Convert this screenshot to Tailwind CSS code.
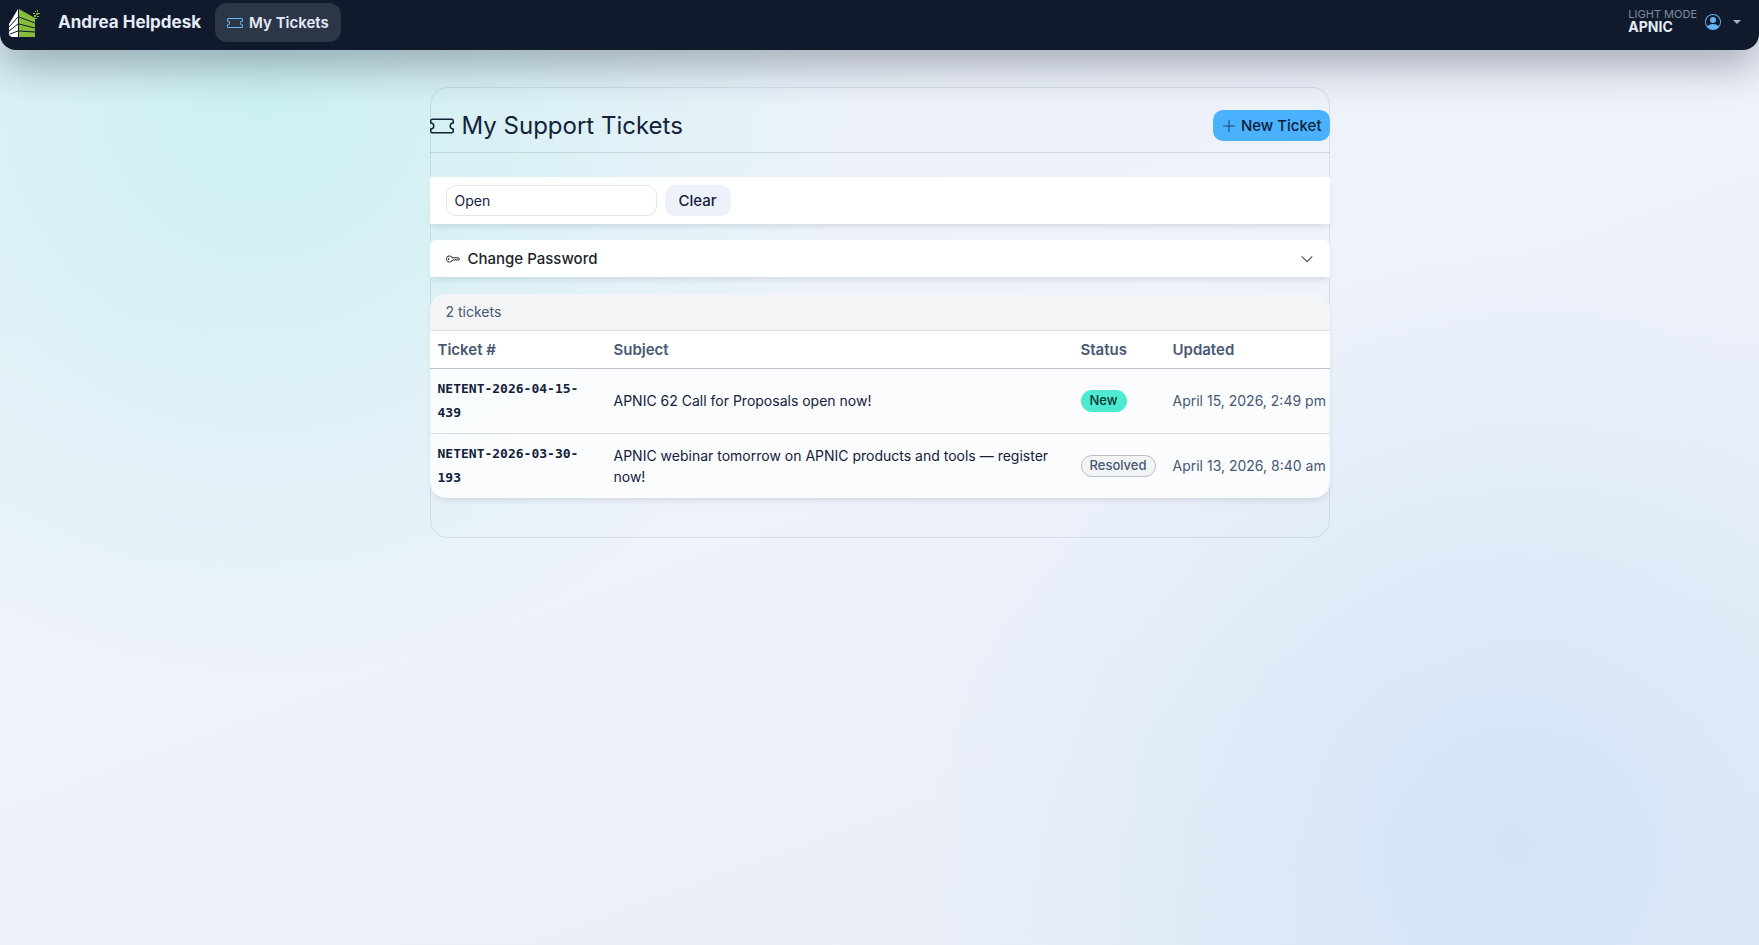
<!DOCTYPE html>
<html lang="en">
  <head>
    <meta charset="UTF-8" />
    <meta name="viewport" content="width=device-width, initial-scale=1.0" />
    <title>My Tickets - Andrea Helpdesk</title>
    <script src="https://cdn.jsdelivr.net/npm/@tailwindcss/browser@4"></script>
    <style>
      body {
        font-family: Inter, "Open Sans", sans-serif;
        background:
          radial-gradient(circle at 15% 10%, rgba(77, 233, 209, 0.2), transparent 34%),
          radial-gradient(circle at 86% 89%, rgba(74, 165, 240, 0.15), transparent 34%),
          linear-gradient(160deg, #ebf2f9 0%, #eef2fa 45%, #e9eef7 100%);
      }
    </style>
  </head>
  <body class="min-h-screen text-sm text-[#14213a]">
    <nav class="flex h-[50px] items-start justify-between rounded-b-2xl bg-[#111a2c] px-2 text-[#e4ecf8] shadow-[0_16px_40px_rgba(15,23,42,0.32)]">
      <div class="flex items-center pt-[3px]">
        <a href="#" class="flex items-center gap-[18px] text-[17px] font-bold">
          <svg class="size-8" viewBox="0 0 32 32" aria-hidden="true">
            <path d="M10 2v28H5q-4 0-4-4v-9z" fill="#fff" />
            <path d="M11 2l16 9v19H11z" fill="#86bc3c" />
            <path d="M11 10l16 6M11 17l16 4M11 24l16 1M10 10L1 20M10 17l-9 7M10 24l-8 3" stroke="#111a2c" fill="none" />
            <path d="M26 8h2v2h-2zM28 6h2v2h-2zM29 9h2v1h-2zM27 4h1v1h-1zM29 3h1v2h-1zM25 6h2v1h-2zM30 6h2v1h-2zM27 11h2v1h-2z" fill="#86bc3c" />
          </svg>
          Andrea Helpdesk
        </a>
        <a href="#" class="ml-3.5 flex h-[39px] items-center gap-1.5 rounded-xl bg-[#2d3646] px-3 text-[15px] font-semibold">
          <svg class="size-4 text-[#65b5f6]" fill="currentColor" viewBox="0 0 16 16" aria-hidden="true">
            <path d="M0 4.5A1.500 1.500 0 0 1 1.500 3h13A1.500 1.500 0 0 1 16 4.500V6a.5.5 0 0 1-.5.5 1.500 1.500 0 0 0 0 3 .5.5 0 0 1 .5.5v1.500a1.500 1.500 0 0 1-1.500 1.500h-13A1.500 1.500 0 0 1 0 11.500V10a.5.5 0 0 1 .5-.5 1.500 1.500 0 1 0 0-3A.5.5 0 0 1 0 6zM1.500 4a.5.5 0 0 0-.5.5v1.050a2.500 2.500 0 0 1 0 4.900v1.050a.5.5 0 0 0 .5.5h13a.5.5 0 0 0 .5-.5v-1.050a2.500 2.500 0 0 1 0-4.900V4.500a.5.5 0 0 0-.5-.5z" />
          </svg>
          My Tickets
        </a>
      </div>
      <button type="button" class="flex items-center gap-2 pt-[9px] pr-2.5 text-left">
        <span class="flex flex-col">
          <span class="text-[11px] leading-[11px] text-[#7e8a9d]">LIGHT MODE</span>
          <span class="text-sm leading-[14px] font-bold">APNIC</span>
        </span>
        <svg class="size-4 text-[#65b5f6]" fill="currentColor" viewBox="0 0 16 16" aria-hidden="true">
          <path d="M11 6a3 3 0 1 1-6 0 3 3 0 0 1 6 0" />
          <path fill-rule="evenodd" d="M0 8a8 8 0 1 1 16 0A8 8 0 0 1 0 8m8-7a7 7 0 0 0-5.468 11.370C3.242 11.226 4.805 10 8 10s4.757 1.225 5.468 2.370A7 7 0 0 0 8 1" />
        </svg>
        <span class="ml-1 border-x-4 border-t-4 border-x-transparent border-t-[#a9b2c0]"></span>
      </button>
    </nav>

    <main class="mx-auto mt-[37px] max-w-[900px] rounded-[18px] pt-[23px] pb-10 inset-ring inset-ring-[#64748b]/15">
      <header class="flex items-start justify-between border-b border-[#64748b]/20 pb-[10px]">
        <h1 class="flex h-8 items-center gap-2 text-2xl">
          <svg class="size-6" fill="currentColor" viewBox="0 0 16 16" aria-hidden="true">
            <path d="M0 4.500A1.500 1.500 0 0 1 1.500 3h13A1.500 1.500 0 0 1 16 4.500V6a.5.5 0 0 1-.5.5 1.500 1.500 0 0 0 0 3 .5.5 0 0 1 .5.5v1.500a1.500 1.500 0 0 1-1.500 1.500h-13A1.500 1.500 0 0 1 0 11.500V10a.5.5 0 0 1 .5-.5 1.500 1.500 0 1 0 0-3A.5.5 0 0 1 0 6zM1.500 4a.5.5 0 0 0-.5.5v1.050a2.500 2.500 0 0 1 0 4.900v1.050a.5.5 0 0 0 .5.5h13a.5.5 0 0 0 .5-.5v-1.050a2.500 2.500 0 0 1 0-4.900V4.500a.5.5 0 0 0-.5-.5z" />
          </svg>
          My Support Tickets
        </h1>
        <button type="button" class="flex h-[31px] items-center gap-1 rounded-[10px] bg-[#4ab1ff] px-2 text-[15px] font-medium text-[#0b2036]">
          <svg class="size-4 opacity-70" fill="currentColor" viewBox="0 0 16 16" aria-hidden="true">
            <path d="M8 2a.5.5 0 0 1 .5.5v5h5a.5.5 0 0 1 0 1h-5v5a.5.5 0 0 1-1 0v-5h-5a.5.5 0 0 1 0-1h5v-5A.5.5 0 0 1 8 2" />
          </svg>
          New Ticket
        </button>
      </header>

      <form class="mt-6 flex gap-2 bg-white px-4 py-2 shadow-[0_4px_6px_-2px_rgba(15,23,42,0.12)]">
        <select aria-label="Status" class="h-[31px] w-[211px] appearance-none rounded-[10px] border border-[#e2e8ea] bg-white px-2">
          <option>Open</option>
          <option>Resolved</option>
        </select>
        <button type="reset" class="h-[31px] rounded-[10px] bg-[#edf1fa] px-3.5 text-[15px] font-medium">Clear</button>
      </form>

      <button type="button" class="mt-4 flex h-[37px] w-full items-center gap-2 rounded-t-md bg-white/95 px-4 text-[15px] font-medium text-[#212529] shadow-[0_4px_6px_-2px_rgba(15,23,42,0.12)]">
        <svg class="size-3.5" fill="currentColor" viewBox="0 0 16 16" aria-hidden="true">
          <path d="M0 8a4 4 0 0 1 7.465-2H14a.5.5 0 0 1 .354.146l1.500 1.500a.5.5 0 0 1 0 .708l-1.500 1.500a.5.5 0 0 1-.708 0L13 9.207l-.646.647a.5.5 0 0 1-.708 0L11 9.207l-.646.647a.5.5 0 0 1-.708 0L9 9.207l-.646.647A.5.5 0 0 1 8 10h-.535A4 4 0 0 1 0 8m4-3a3 3 0 1 0 2.712 4.285A.5.5 0 0 1 7.163 9h.630l.853-.854a.5.5 0 0 1 .708 0l.646.647.646-.647a.5.5 0 0 1 .708 0l.646.647.646-.647a.5.5 0 0 1 .708 0l.646.647.793-.793-1-1h-6.630a.5.5 0 0 1-.451-.285A3 3 0 0 0 4 5" />
          <path d="M4 8a1 1 0 1 1-2 0 1 1 0 0 1 2 0" />
        </svg>
        Change Password
        <svg class="ml-auto size-3.5" fill="none" stroke="#4b5563" stroke-width="1.3" viewBox="0 0 16 16" aria-hidden="true">
          <path d="M2 5l6 6 6-6" />
        </svg>
      </button>

      <section class="mt-[17px] overflow-hidden rounded-2xl bg-white/80 shadow-[0_4px_6px_-2px_rgba(15,23,42,0.12)]">
        <h2 class="h-[37px] border-b border-[#dbe0e5] bg-[#f2f4f5] px-4 leading-9 text-[#475873]">2 tickets</h2>
        <table class="w-full table-fixed text-left">
          <colgroup>
            <col class="w-[176px]" />
            <col />
            <col class="w-[92px]" />
            <col class="w-[165px]" />
          </colgroup>
          <thead>
            <tr class="h-[37px] border-b border-[#bcc3cd] bg-white text-[15px] text-[#475873]">
              <th class="px-2 font-semibold">Ticket #</th>
              <th class="px-2 font-semibold">Subject</th>
              <th class="px-2 font-semibold">Status</th>
              <th class="px-2 font-semibold">Updated</th>
            </tr>
          </thead>
          <tbody>
            <tr class="h-[65px] border-b border-[#dbe0e5]">
              <td class="px-2"><a href="#" class="font-['DejaVu_Sans_Mono'] text-[13px] leading-6 font-bold">NETENT-2026-04-15-<br />439</a></td>
              <td class="px-2 leading-[21px]">APNIC 62 Call for Proposals open now!</td>
              <td class="px-2"><span class="inline-flex h-[22px] items-center rounded-full bg-[#4de9d1] px-[9px] text-[13px] font-medium text-[#06382f]">New</span></td>
              <td class="px-2 whitespace-nowrap text-[#475873]">April 15, 2026, 2:49 pm</td>
            </tr>
            <tr class="h-[65px]">
              <td class="px-2"><a href="#" class="font-['DejaVu_Sans_Mono'] text-[13px] leading-6 font-bold">NETENT-2026-03-30-<br />193</a></td>
              <td class="px-2 leading-[21px]">APNIC webinar tomorrow on APNIC products and tools — register now!</td>
              <td class="px-2"><span class="inline-flex h-[22px] items-center rounded-full border border-[#b9bfc8] bg-[#f2f4f5] px-2 text-[13px] font-medium text-[#475873]">Resolved</span></td>
              <td class="px-2 whitespace-nowrap text-[#475873]">April 13, 2026, 8:40 am</td>
            </tr>
          </tbody>
        </table>
      </section>
    </main>
  </body>
</html>
